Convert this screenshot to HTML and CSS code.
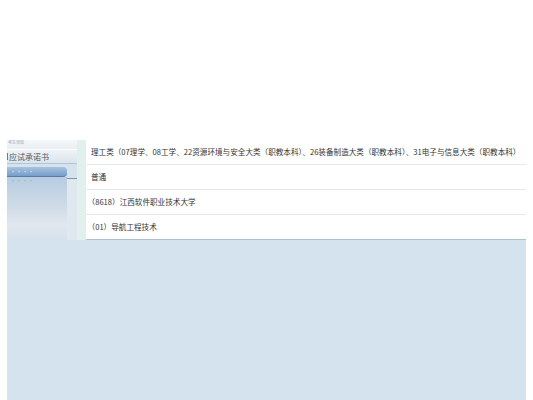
FILE: index.html
```html
<!DOCTYPE html>
<html lang="zh-CN">
<head>
<meta charset="utf-8">
<title>报考信息</title>
<link rel="stylesheet" href="styles.css">
</head>
<body>
<div class="page">
  <div class="main">
    <div class="top-row">
      <aside class="sidebar">
        <div class="sb-top"><span>考生须知</span></div>
        <div class="sb-item"><span>应试承诺书</span></div>
        <div class="sb-active"><span>····</span></div>
        <div class="sb-panel">
          <div class="sb-panel-left"><span class="dots">····</span></div>
          <div class="sb-panel-right"></div>
        </div>
      </aside>
      <div class="strip"></div>
      <section class="content">
        <div class="row">理工类（07理学、08工学、22资源环境与安全大类（职教本科）、26装备制造大类（职教本科）、31电子与信息大类（职教本科）</div>
        <div class="row">普通</div>
        <div class="row paren">（8618）江西软件职业技术大学</div>
        <div class="row paren">（01）导航工程技术</div>
      </section>
    </div>
  </div>
</div>
</body>
</html>
```
FILE: styles.css
```css
html, body {
  margin: 0;
  padding: 0;
  background: #ffffff;
}
body {
  font-family: "Noto Sans CJK SC", "Noto Sans", sans-serif;
  color: #333333;
}
.page {
  padding: 140px 7px 0 7px;
  height: 260px;
}
.main {
  height: 260px;
  background: #d5e3ee;
}
.top-row {
  display: flex;
  align-items: stretch;
}
.sidebar {
  width: 70px;
  flex-shrink: 0;
  display: flex;
  flex-direction: column;
}
.sb-top {
  height: 9px;
  background: linear-gradient(#f4f7f9, #e9eef2);
  font-size: 4px;
  color: #9aa6b2;
  line-height: 5px;
}
.sb-top span {
  display: block;
  padding-left: 1px;
}
.sb-item {
  height: 13px;
  border-top: 1px solid #ffffff;
  border-bottom: 1px solid #b4c5d4;
  background: linear-gradient(#eef3f7, #dbe4ec);
  font-size: 8px;
  line-height: 13px;
  color: #4d5a66;
  white-space: nowrap;
  display: flex;
  align-items: center;
}
.sb-item::before {
  content: "";
  width: 1px;
  height: 7px;
  background: #6d7a86;
  margin-right: 1px;
}
.sb-active {
  margin-top: 3px;
  width: 57px;
  height: 9px;
  border-radius: 0 4px 4px 0;
  background: linear-gradient(#a9c3de, #769dca);
  border-bottom: 1px solid #587ca6;
  font-size: 6px;
  line-height: 9px;
  color: #dbe6f2;
  padding-left: 3px;
  overflow: hidden;
}
.sb-panel {
  flex: 1;
  display: flex;
}
.sb-panel-left {
  width: 57px;
  background: linear-gradient(#b7cde2 0%, #d3dee8 55%, #e1e7ed 75%, #d5e3ee 100%);
  font-size: 6px;
  line-height: 8px;
  color: #98aec4;
  padding-left: 3px;
}
.sb-panel-right {
  flex: 1;
  background: #dfe7ef;
  border-top: 1px solid #7f97ae;
  margin-top: 1px;
}
.strip {
  width: 9px;
  flex-shrink: 0;
  background: #e1f0ed;
}
.content {
  flex: 1;
  min-width: 0;
  background: #ffffff;
  border-bottom: 1px solid #aebfd0;
}
.row {
  height: 24px;
  line-height: 24px;
  padding-left: 5px;
  font-size: 7.6px;
  color: #333333;
  white-space: nowrap;
  border-bottom: 1px solid #e4e9ed;
}
.row.paren {
  text-indent: -0.45em;
}
.row:last-child {
  border-bottom: none;
}
```
